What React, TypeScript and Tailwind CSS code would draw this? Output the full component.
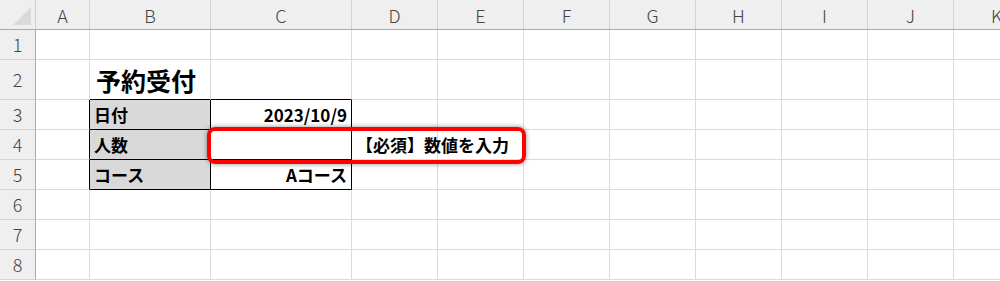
const COLS = [
  { name: "A", w: "w-[54px]" },
  { name: "B", w: "w-[121px]" },
  { name: "C", w: "w-[141px]" },
  { name: "D", w: "w-[86px]" },
  { name: "E", w: "w-[86px]" },
  { name: "F", w: "w-[86px]" },
  { name: "G", w: "w-[86px]" },
  { name: "H", w: "w-[86px]" },
  { name: "I", w: "w-[86px]" },
  { name: "J", w: "w-[86px]" },
  { name: "K", w: "w-[86px]" },
];

const ROWS = [
  { n: 1, h: "h-[30px]" },
  { n: 2, h: "h-[40px]" },
  { n: 3, h: "h-[30px]" },
  { n: 4, h: "h-[30px]" },
  { n: 5, h: "h-[30px]" },
  { n: 6, h: "h-[30px]" },
  { n: 7, h: "h-[30px]" },
  { n: 8, h: "h-[30px]" },
];

const FONT = "font-['Noto_Sans_CJK_JP','Noto_Sans',sans-serif]";

type Cell = { text?: string; align?: "left" | "right"; fill?: boolean; big?: boolean };

const DATA: Record<string, Cell> = {
  B2: { text: "予約受付", big: true },
  B3: { text: "日付", fill: true },
  C3: { text: "2023/10/9", align: "right" },
  B4: { text: "人数", fill: true },
  B5: { text: "コース", fill: true },
  C5: { text: "Aコース", align: "right" },
  D4: { text: "【必須】数値を入力" },
};

// black borders around B3:C5
function rightBlack(col: string, row: number) {
  return row >= 3 && row <= 5 && (col === "A" || col === "B" || col === "C");
}
function bottomBlack(col: string, row: number) {
  return (col === "B" || col === "C") && row >= 2 && row <= 5;
}

export default function App() {
  return (
    <div className={`relative h-[281px] w-[1000px] overflow-hidden bg-white ${FONT}`}>
      {/* column headers */}
      <div className="flex h-[30px] border-b border-[#a8a8a8] bg-[#efefef]">
        <div className="relative w-[36px] shrink-0 border-r border-[#d0d0d0]">
          <div className="absolute bottom-[4px] right-[4px] h-0 w-0 border-b-[18px] border-l-[18px] border-b-[#dadada] border-l-transparent" />
        </div>
        {COLS.map((c) => (
          <div
            key={c.name}
            className={`${c.w} flex shrink-0 items-center justify-center border-r border-[#d4d4d4] pt-[1px] text-[18px] font-light text-[#444]`}
          >
            {c.name}
          </div>
        ))}
      </div>

      {/* rows */}
      {ROWS.map((r) => (
        <div key={r.n} className={`flex ${r.h}`}>
          <div className="flex w-[36px] shrink-0 items-center justify-center border-r border-b border-r-[#a8a8a8] border-b-[#d4d4d4] bg-[#efefef] text-[18px] font-light text-[#444]">
            {r.n}
          </div>
          {COLS.map((c) => {
            const cell = DATA[c.name + r.n];
            const rb = rightBlack(c.name, r.n);
            const bb = bottomBlack(c.name, r.n);
            return (
              <div
                key={c.name}
                className={`${c.w} flex shrink-0 items-center whitespace-nowrap border-r border-b px-[4px] font-bold text-black ${
                  rb ? "border-r-black" : "border-r-[#dadada]"
                } ${bb ? "border-b-black" : "border-b-[#dadada]"} ${
                  cell?.fill ? "bg-[#d9d9d9]" : ""
                } ${cell?.align === "right" ? "justify-end" : "justify-start"} ${
                  cell?.big ? "overflow-visible pt-[2px] pl-[6px] text-[25px]" : "text-[17px]"
                }`}
              >
                {cell?.text}
              </div>
            );
          })}
        </div>
      ))}

      {/* red highlight */}
      <div className="absolute left-[207px] top-[127px] h-[37px] w-[319px] rounded-[8px] border-4 border-[#ff0000] shadow-[0_0_5px_rgba(0,0,0,0.45)]" />
    </div>
  );
}
